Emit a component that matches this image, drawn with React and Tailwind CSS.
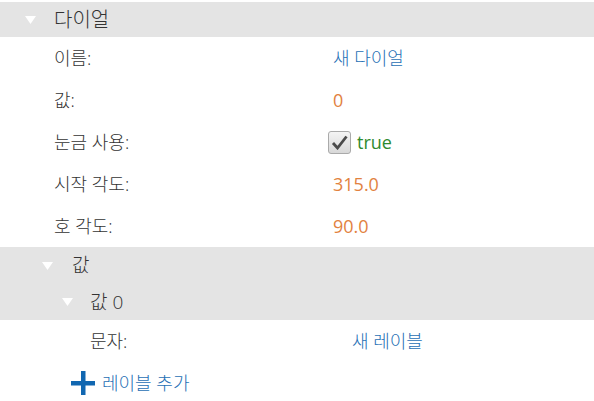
import React from 'react';

const font = { fontFamily: '"Open Sans", "Noto Sans CJK KR", sans-serif' };

function Tri({ className }) {
  return (
    <svg width="11" height="8" viewBox="0 0 11 8" className={className}>
      <polygon points="0,0 11,0 5.5,8" fill="#ffffff" />
    </svg>
  );
}

function Row({ label, children, labelPad = 'pl-[54px]', valuePad = 'pl-[333px]' }) {
  return (
    <div className="relative flex h-[42px] items-center text-[18px] font-light text-[#333]">
      <div className={`${labelPad}`}>{label}</div>
      <div className={`absolute left-0 top-0 flex h-full items-center ${valuePad}`}>{children}</div>
    </div>
  );
}

export default function App() {
  return (
    <div className="h-[401px] w-[594px] overflow-hidden bg-white pt-[2px]" style={font}>
      <div className="flex h-[35px] items-center bg-[#e4e4e4] text-[20px] font-light text-[#333]">
        <Tri className="ml-[25px] mr-[18px]" />
        <span className="pt-[1px]">다이얼</span>
      </div>
      <Row label="이름:">
        <span className="text-[#1f6fb5]">새 다이얼</span>
      </Row>
      <Row label="값:">
        <span className="font-normal text-[#e2823f]">0</span>
      </Row>
      <Row label="눈금 사용:">
        <span className="flex items-center gap-[6px]">
          <span className="-ml-[5px] flex h-[23px] w-[23px] items-center justify-center rounded-[3px] border border-[#aaa] bg-gradient-to-b from-[#f4f4f4] to-[#d8d8d8]">
            <svg width="17" height="15" viewBox="0 0 17 15">
              <path d="M2 8 L6.5 13 L15.5 1.5" fill="none" stroke="#4a4a4a" strokeWidth="2.8" />
            </svg>
          </span>
          <span className="font-normal text-[#2e8a2e]">true</span>
        </span>
      </Row>
      <Row label="시작 각도:">
        <span className="font-normal text-[#e2823f]">315.0</span>
      </Row>
      <Row label="호 각도:">
        <span className="font-normal text-[#e2823f]">90.0</span>
      </Row>
      <div className="flex h-[37px] items-center bg-[#e4e4e4] text-[19px] font-light text-[#333]">
        <Tri className="ml-[42px] mr-[19px]" />
        <span>값</span>
      </div>
      <div className="flex h-[36px] items-center bg-[#e4e4e4] text-[19px] font-light text-[#333]">
        <Tri className="ml-[62px] mr-[17px]" />
        <span>값 0</span>
      </div>
      <Row label="문자:" labelPad="pl-[90px]" valuePad="pl-[352px]">
        <span className="text-[#1f6fb5]">새 레이블</span>
      </Row>
      <div className="flex h-[42px] items-center text-[18px] font-light">
        <svg width="24" height="24" viewBox="0 0 24 24" className="ml-[71px] mr-[7px]">
          <rect x="10" y="0" width="4.5" height="24" fill="#1167b1" />
          <rect x="0" y="10" width="24" height="4.5" fill="#1167b1" />
        </svg>
        <span className="text-[#1f6fb5]">레이블 추가</span>
      </div>
    </div>
  );
}
